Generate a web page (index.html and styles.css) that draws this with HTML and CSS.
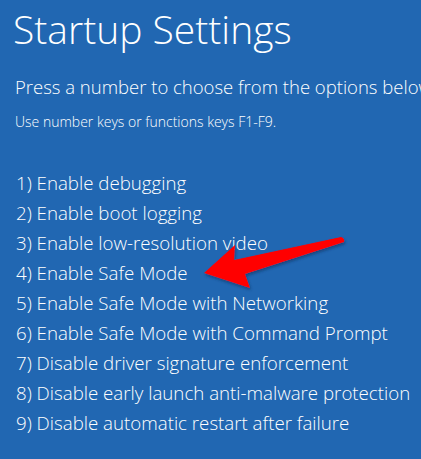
FILE: index.html
```html
<!DOCTYPE html>
<html lang="en">
<head>
    <meta charset="UTF-8">
    <meta name="viewport" content="width=device-width, initial-scale=1.0">
    <title>Startup Settings</title>
    <link rel="stylesheet" href="styles.css">
</head>
<body>
    <div class="screen">
        <h1>Startup Settings</h1>
        <p class="lead">Press a number to choose from the options below:</p>
        <p class="hint">Use number keys or functions keys F1-F9.</p>

        <ol class="options">
            <li>1) Enable debugging</li>
            <li>2) Enable boot logging</li>
            <li>3) Enable low-resolution video</li>
            <li>4) Enable Safe Mode</li>
            <li>5) Enable Safe Mode with Networking</li>
            <li>6) Enable Safe Mode with Command Prompt</li>
            <li>7) Disable driver signature enforcement</li>
            <li>8) Disable early launch anti-malware protection</li>
            <li>9) Disable automatic restart after failure</li>
        </ol>

        <!-- red callout arrow pointing at option 4 -->
        <svg class="arrow" width="421" height="459" viewBox="0 0 421 459">
            <defs>
                <filter id="shadow" x="-10%" y="-20%" width="130%" height="150%">
                    <feDropShadow dx="1" dy="2" stdDeviation="1.5" flood-color="#0a2a55" flood-opacity="0.6"/>
                </filter>
            </defs>
            <path d="M204 273 L235 245 L234 260 L341 237 Q345 238 344 242 L245 274 L250 288 Z" fill="#ff0000" filter="url(#shadow)"/>
        </svg>
    </div>
</body>
</html>
```

FILE: styles.css
```css
html, body { margin: 0; padding: 0; }
body { background-color: #2167b2; color: #ffffff; font-family: "Open Sans", "Noto Sans", sans-serif; overflow: hidden; }
.screen { position: relative; width: 421px; height: 459px; padding: 0 0 0 13px; box-sizing: border-box; white-space: nowrap; overflow: hidden; }
h1 { margin: 0; padding-top: 3px; font-size: 39px; font-weight: 300; line-height: 52px; }
.lead { margin: 19px 0 0 2px; font-size: 18.5px; font-weight: 300; line-height: 26px; }
.hint { margin: 13px 0 0 2px; font-size: 14px; font-weight: 300; line-height: 18px; }
.options { list-style: none; margin: 37px 0 0 3px; padding: 0; }
.options li { font-size: 18.7px; font-weight: 300; line-height: 30px; }
.arrow { position: absolute; left: 0; top: 0; pointer-events: none; }
```
